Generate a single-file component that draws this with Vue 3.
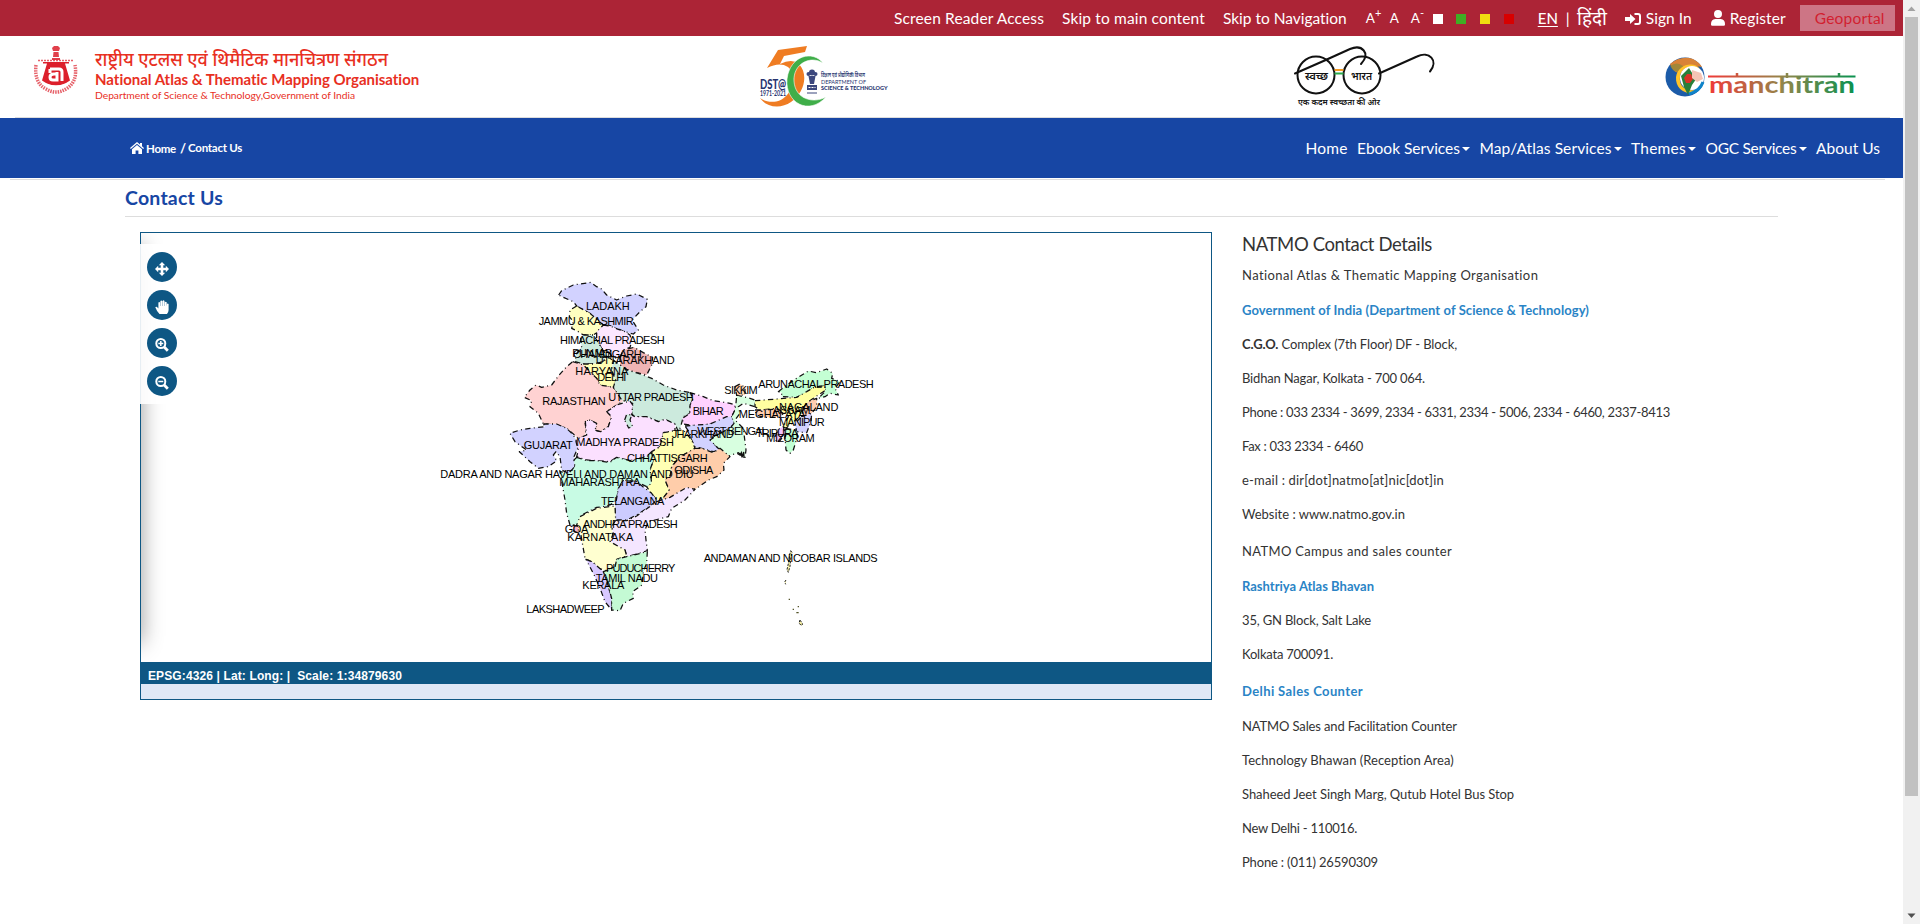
<script setup>
// Spaces the letters of a line so that it fills the given width.
const vFit = {
  mounted(el, { value }) {
    const natural = el.getBoundingClientRect().width
    const count = el.textContent.trim().length
    el.style.letterSpacing = (value - natural) / count + 'px'
  }
}

const menu = [
  { t: 'Home', w: 42, c: false },
  { t: 'Ebook Services', w: 103, c: true },
  { t: 'Map/Atlas Services', w: 132, c: true },
  { t: 'Themes', w: 55, c: true },
  { t: 'OGC Services', w: 91, c: true },
  { t: 'About Us', w: 64, c: false }
]

const contact = [
  { t: 'National Atlas & Thematic Mapping Organisation', w: 297 },
  { t: 'Government of India (Department of Science & Technology)', w: 347, k: 'link first' },
  { b: 'C.G.O.', t: ' Complex (7th Floor) DF - Block,', w: 215 },
  { t: 'Bidhan Nagar, Kolkata - 700 064.', w: 183 },
  { t: 'Phone : 033 2334 - 3699, 2334 - 6331, 2334 - 5006, 2334 - 6460, 2337-8413', w: 428 },
  { t: 'Fax : 033 2334 - 6460', w: 121 },
  { t: 'e-mail : dir[dot]natmo[at]nic[dot]in', w: 202 },
  { t: 'Website : www.natmo.gov.in', w: 163 },
  { t: 'NATMO Campus and sales counter', w: 210, k: 'wide' },
  { t: 'Rashtriya Atlas Bhavan', w: 132, k: 'link first' },
  { t: '35, GN Block, Salt Lake', w: 129 },
  { t: 'Kolkata 700091.', w: 91 },
  { t: 'Delhi Sales Counter', w: 121, k: 'link wide' },
  { t: 'NATMO Sales and Facilitation Counter', w: 215, k: 'first' },
  { t: 'Technology Bhawan (Reception Area)', w: 212 },
  { t: 'Shaheed Jeet Singh Marg, Qutub Hotel Bus Stop', w: 272 },
  { t: 'New Delhi - 110016.', w: 115 },
  { t: 'Phone : (011) 26590309', w: 136 }
]

const states = [
  ['#d2d2ff', '386,75 395,62 430,45 482,37 500,50 515,57 530,75 560,90 590,78 620,72 652,88 648,110 630,125 606,150 625,180 610,192 585,185 560,175 540,167 520,165 500,148 480,130 465,122 440,108 430,95 400,82'],
  ['#ffffc0', '440,108 420,120 418,140 430,155 425,175 445,185 460,195 490,195 505,185 520,165 500,148 480,130 465,122'],
  ['#fce6ff', '520,165 540,168 565,178 585,185 600,195 605,215 600,232 580,240 570,262 550,265 535,245 515,235 500,210 500,185'],
  ['#cceadd', '460,195 490,195 500,210 515,235 530,255 520,275 490,282 460,282 435,275 440,250 455,230 452,205'],
  ['#f0b4b4', '570,262 580,240 612,232 640,248 668,262 665,285 650,315 620,308 590,298 570,285'],
  ['#ffffb4', '460,282 490,282 520,275 535,262 548,270 545,300 557,330 555,350 530,350 510,345 500,325 485,310 460,300'],
  ['#ffd2d2', '428,275 460,285 485,310 500,325 510,345 550,352 570,375 585,390 560,405 530,425 545,440 535,470 510,485 495,480 500,462 480,450 465,455 468,478 465,500 445,505 430,492 410,475 380,465 340,462 325,430 300,410 305,392 283,382 300,360 318,345 335,352 365,345 385,318 410,290'],
  ['#d2d2ff', '340,462 380,462 410,475 430,495 438,510 445,530 432,560 435,590 415,610 395,600 390,560 378,545 370,555 380,572 355,590 325,595 300,575 268,545 290,540 255,515 240,490 270,480 300,475 345,470'],
  ['#cceadd', '550,270 570,285 590,300 625,310 665,325 700,345 740,360 780,368 790,385 780,405 780,430 760,440 752,470 745,485 735,462 705,448 685,455 650,440 615,440 605,432 608,400 575,390 550,352 557,330 545,300'],
  ['#fbe0ff', '530,425 560,405 600,393 608,405 605,435 615,440 650,440 685,455 705,448 735,462 735,482 700,488 700,505 690,530 665,545 650,560 600,572 560,562 540,575 500,572 470,570 440,560 445,540 438,515 445,505 470,495 468,478 466,455 480,450 500,460 495,482 512,485 535,470 545,440'],
  ['#cceadd', '584,450 590,433 605,435 600,450 608,470 596,474'],
  ['#ffd2ff', '780,368 820,380 850,392 900,400 915,405 915,420 905,440 890,450 870,462 840,462 800,468 760,462 757,445 780,430 780,405 790,385'],
  ['#d2d2ff', '765,468 840,462 890,440 912,440 912,460 900,475 870,490 845,505 855,525 872,540 850,545 815,535 795,530 785,510 780,490'],
  ['#d8ffe0', '920,375 960,385 975,390 975,410 940,400 925,410 930,430 915,450 925,460 940,475 948,540 945,562 925,548 890,560 870,540 840,510 870,490 900,475 912,460 905,440 915,420 918,400'],
  ['#ffd2b0', '915,350 930,342 945,352 945,375 920,376'],
  ['#c4ffd4', '1045,365 1070,345 1100,325 1135,303 1160,308 1190,297 1208,310 1205,325 1230,335 1215,355 1225,375 1200,370 1185,380 1165,385 1185,365 1185,348 1155,350 1130,368 1100,382 1055,380 1055,367'],
  ['#ffffa0', '975,392 1030,388 1100,382 1130,365 1155,350 1185,348 1185,362 1160,378 1135,395 1120,420 1110,440 1085,460 1068,475 1060,470 1075,440 1065,430 1040,415 990,420 975,410'],
  ['#ffcdb0', '1120,412 1135,395 1160,385 1160,410 1145,430 1115,440'],
  ['#d2d2ff', '1115,440 1145,430 1143,455 1130,488 1100,485 1095,460'],
  ['#ffcdb0', '975,420 1040,418 1060,430 1050,442 1000,442 980,435'],
  ['#f0c0ff', '1035,500 1045,478 1060,470 1065,490 1050,512 1040,517'],
  ['#c4ffd4', '1068,475 1100,482 1102,500 1090,540 1080,550 1068,540 1065,500'],
  ['#ffffb4', '700,488 735,482 760,480 785,510 795,535 780,545 750,560 725,590 720,620 705,630 718,660 700,685 680,690 660,665 650,650 665,630 660,600 670,570 665,545 690,530'],
  ['#ffcdaa', '795,535 815,535 850,548 870,535 900,560 880,580 882,600 860,620 835,630 800,655 760,670 725,685 695,690 718,660 705,630 722,615 725,590 750,560'],
  ['#c8fbe4', '440,562 470,572 500,572 540,577 560,562 600,572 650,560 665,548 670,570 660,600 665,640 650,650 620,635 580,630 565,655 560,690 540,705 520,710 500,712 455,735 450,762 420,765 410,730 405,690 398,650 390,605 415,610 435,590 432,570'],
  ['#ccccff', '565,655 580,632 620,635 645,655 665,670 680,690 665,705 620,735 590,750 555,750 555,715'],
  ['#f4e6ff', '680,695 720,682 770,652 795,658 765,690 725,715 715,740 655,755 645,780 648,810 652,842 620,852 590,860 585,840 555,828 540,815 550,790 545,770 555,752 590,752 620,738'],
  ['#ffffd0', '450,740 500,715 555,708 557,750 545,770 548,795 540,815 585,840 590,858 560,868 555,890 530,902 505,895 490,878 465,865 458,825 452,790 440,765'],
  ['#ffb4c8', '428,765 445,770 445,788 432,785'],
  ['#d8c8ff', '468,868 490,878 520,905 530,930 545,985 545,1020 525,995 512,960 495,920'],
  ['#c4fad4', '520,905 555,892 560,868 590,860 652,845 650,880 640,905 636,945 608,965 610,985 580,1000 570,1022 545,1020 545,985 530,930']
]

// name, left edge, right edge, baseline
const labels = [
  ['LADAKH', 469, 598, 121],
  ['JAMMU & KASHMIR', 327, 610, 166],
  ['HIMACHAL PRADESH', 391, 703, 223],
  ['PUNJAB', 428, 545, 261],
  ['CHANDIGARH', 430, 634, 264],
  ['UTTARAKHAND', 498, 733, 282],
  ['HARYANA', 437, 594, 316],
  ['DELHI', 503, 588, 333],
  ['UTTAR PRADESH', 536, 790, 394],
  ['RAJASTHAN', 338, 526, 405],
  ['BIHAR', 789, 880, 435],
  ['WEST BENGAL', 803, 1012, 495],
  ['JHARKHAND', 726, 910, 504],
  ['GUJARAT', 282, 427, 537],
  ['MADHYA PRADESH', 440, 731, 528],
  ['CHHATTISGARH', 592, 832, 576],
  ['ODISHA', 734, 849, 612],
  ['DADRA AND NAGAR HAVELI AND DAMAN AND DIU', 32, 790, 624],
  ['MAHARASHTRA', 389, 630, 648],
  ['TELANGANA', 514, 702, 705],
  ['ANDHRA PRADESH', 460, 742, 775],
  ['GOA', 405, 474, 789],
  ['KARNATAKA', 413, 609, 813],
  ['PUDUCHERRY', 529, 735, 906],
  ['TAMIL NADU', 498, 683, 936],
  ['KERALA', 458, 582, 957],
  ['LAKSHADWEEP', 290, 523, 1029],
  ['SIKKIM', 884, 982, 372],
  ['ARUNACHAL PRADESH', 986, 1330, 354],
  ['NAGALAND', 1048, 1224, 422],
  ['ASSAM', 1029, 1140, 433],
  ['MEGHALAYA', 927, 1125, 444],
  ['MANIPUR', 1048, 1183, 468],
  ['TRIPURA', 979, 1104, 501],
  ['MIZORAM', 1010, 1153, 516],
  ['ANDAMAN AND NICOBAR ISLANDS', 822, 1342, 876]
]
</script>

<template>
  <div class="page">
    <main class="content">
      <div class="topbar">
        <a v-fit="150">Screen Reader Access</a>
        <a v-fit="143" class="g18">Skip to main content</a>
        <a v-fit="124" class="g18">Skip to Navigation</a>
        <span class="size s1">A<sup>+</sup></span>
        <span class="size s2">A</span>
        <span class="size s3">A<sup>-</sup></span>
        <span class="swatches"><i class="sw white"></i><i class="sw green"></i><i class="sw yellow"></i><i class="sw red"></i></span>
        <a class="en">EN</a>
        <span class="bar">|</span>
        <svg class="hin" width="31" height="30" viewBox="0 0 31 30"><text x="0" y="22" textLength="30" lengthAdjust="spacingAndGlyphs" font-size="19" fill="#fff">हिंदी</text></svg>
        <svg class="signicon" width="16" height="12" viewBox="0 0 16 12"><path d="M0 4h5V1l5.500 5L5 11V8H0zM9.500 0H13a3 3 0 0 1 3 3v6a3 3 0 0 1-3 3H9.500v-2H13q1 0 1-1V3q0-1-1-1H9.500z" fill="#fff" /></svg>
        <a v-fit="46" class="g5">Sign In</a>
        <svg class="usericon" width="14" height="16" viewBox="0 0 14 16"><path d="M7 0a4 4 0 1 1 0 8 4 4 0 0 1 0-8zM4.300 9h5.400Q14 9.500 14 14v.5q0 1.200-1.200 1.200H1.200Q0 15.700 0 14.500V14Q0 9.500 4.300 9z" fill="#fff" /></svg>
        <a v-fit="56" class="g5">Register</a>
        <a class="geo"><span v-fit="70">Geoportal</span></a>
      </div>

      <header class="brand">
        <svg class="emblem" width="46" height="52" viewBox="0 0 46 52">
          <g fill="#dc1f2b">
            <path d="M19 3l2-2h4l2 2-1 3h-6zM20.500 7h5l.5 5h-6zM19 13h8v2h-8z" opacity=".85" />
            <path d="M10 17h26v1.500h-4l5 17q-7 5-14 5T9 35.500l5-17h-4z" />
            <path d="M5 15.500h35" stroke="#dc1f2b" stroke-width="1.300" stroke-dasharray="2 1" opacity=".7" />
          </g>
          <path d="M17 24h9q3 0 3 3v9M17 28v-4M25 29h-4q-4 0-4 3 0 3 3 3h4v-8" fill="none" stroke="#fff" stroke-width="3" />
          <path d="M3 20Q1 38 13 44q10 6 20 0 12-7 9-24" fill="none" stroke="#dc1f2b" stroke-width="3.500" stroke-dasharray="1.500 1" opacity=".7" />
          <path d="M12 39.500q11 4 22 0" fill="none" stroke="#fff" stroke-width="2" />
        </svg>
        <div class="org">
          <svg class="org-hi" width="294" height="26" viewBox="0 0 294 26"><text x="0" y="19" textLength="293" lengthAdjust="spacingAndGlyphs" font-size="18.500" font-weight="500" fill="#e8301f">राष्ट्रीय एटलस एवं थिमैटिक मानचित्रण संगठन</text></svg>
          <strong v-fit="325">National Atlas &amp; Thematic Mapping Organisation</strong>
          <small v-fit="260">Department of Science &amp; Technology,Government of India</small>
        </div>

        <svg class="dst" width="136" height="66" viewBox="0 0 136 66">
          <path d="M18 5L47 1l-2 6-21 4-4 8Q32 13 39 19c10 11 5 29-8 38-10 7-24 6-31-4 9 6 20 5 27-3 8-9 9-22 1-28-6-4-13-3-21 1z" fill="#ef7c22" />
          <path d="M63 18C53 5 30 10 27 34c-2 24 22 37 39 18C53 59 35 54 34 36 33 19 50 10 63 18z" fill="#3fae49" stroke="#fff" stroke-width=".6" />
          <g fill="#27346f" opacity=".9">
            <circle cx="52" cy="27.500" r="3" /><circle cx="48.500" cy="29" r="2" /><circle cx="55.500" cy="29" r="2" /><path d="M48.500 31h7l-1.500 8h-4zM47 40h10v5H47zM47 47.500h10v1H47z" />
          </g>
          <path d="M48.500 42.500h7" stroke="#fff" stroke-width="1" stroke-dasharray="2 1" />
          <g fill="#27346f">
            <text x="0" y="43.500" font-size="13.500" font-weight="900" textLength="26" lengthAdjust="spacingAndGlyphs">DST@</text>
            <text x="0" y="51" font-size="7.500" font-weight="700" textLength="26" lengthAdjust="spacingAndGlyphs">1971-2021</text>
            <text x="61" y="31.500" font-size="6" font-weight="600" textLength="44" lengthAdjust="spacingAndGlyphs">विज्ञान एवं प्रौद्योगिकी विभाग</text>
            <text x="61" y="39" font-size="6.300" textLength="45" lengthAdjust="spacingAndGlyphs">DEPARTMENT OF</text>
            <text x="61" y="45" font-size="6.300" font-weight="900" textLength="66.500" lengthAdjust="spacingAndGlyphs">SCIENCE &amp; TECHNOLOGY</text>
          </g>
        </svg>

        <svg class="swachh" width="150" height="64" viewBox="0 0 150 64">
          <g fill="none" stroke="#111" stroke-width="2" stroke-linecap="round">
            <circle cx="20" cy="32" r="18.500" /><circle cx="66" cy="32" r="18.500" />
            <path d="M-1 30.500Q28 18 54 6c12-5 21 4 11 15M83 30.500l38-17c12-6 22 4 13 15" />
          </g>
          <path d="M38.500 27h9" stroke="#f59a23" stroke-width="2" /><path d="M38.500 30.500h9" stroke="#2aa84a" stroke-width="2" />
          <g fill="#111">
            <text x="9" y="37" font-size="10.500" font-weight="600" textLength="23" lengthAdjust="spacingAndGlyphs">स्वच्छ</text>
            <text x="55" y="37" font-size="10.500" font-weight="600" textLength="21" lengthAdjust="spacingAndGlyphs">भारत</text>
            <text x="2" y="61.500" font-size="8.500" font-weight="600" textLength="82" lengthAdjust="spacingAndGlyphs">एक कदम स्वच्छता की ओर</text>
          </g>
        </svg>

        <svg class="manchitran" width="192" height="42" viewBox="0 0 192 42">
          <defs>
            <linearGradient id="word" gradientUnits="userSpaceOnUse" x1="43" x2="190" y1="0" y2="0"><stop offset="0" stop-color="#f03a38" /><stop offset=".5" stop-color="#94854a" /><stop offset="1" stop-color="#0a9250" /></linearGradient>
          </defs>
          <circle cx="20" cy="21" r="19.500" fill="#1c5ba8" />
          <path d="M5 8Q16-1 28 3q6 3 9 8-7-2-9 4-7 4-12 1-7 3-11-8z" fill="#d98237" />
          <path d="M5 10q7-5 13 0 3 5-3 6-6 1-10-6z" fill="#7b8a3b" opacity=".6" />
          <path d="M35 13C29 5 13 8 11 21c-1 14 14 20 21 13-14 2-18-6-17-13 1-9 9-14 20-8z" fill="#ffc328" />
          <circle cx="27" cy="22" r="12" fill="#fff" />
          <path d="M16 20l8-8 5 8 5-1-7 10-4 10-4-8z" fill="#287f39" />
          <path d="M19 22l3-4h4l2 5-3 4h-4z" fill="#d83227" />
          <path d="M27 14l9 3 2 6-6 3-5-4z" fill="#f5c4b5" />
          <path d="M24 38q11-3 14-12" fill="none" stroke="#0e83c9" stroke-width="3" />
          <path d="M43 20.500h147.500" stroke="url(#word)" stroke-width="2.200" />
          <text x="44" y="37" font-size="23" font-weight="700" textLength="146" lengthAdjust="spacingAndGlyphs" fill="url(#word)">manchitran</text>
          <path d="M72 17v3M122 17v5M174 17v3" stroke="url(#word)" stroke-width="2.500" />
        </svg>
      </header>

      <nav class="nav">
        <div class="crumb">
          <svg width="14" height="12" viewBox="0 0 14 12"><path d="M7 0l3 2.600V1h2v3.300l2 1.800-.8.9L7 1.700.8 7 0 6.100zM7 3l5 4.200V12H8.400V8.500H5.600V12H2V7.200z" fill="#fff" /></svg>
          <b v-fit="30" class="home">Home</b><b class="slash">/</b><b v-fit="54" class="here">Contact Us</b>
        </div>
        <div class="menu">
          <a v-for="m in menu" :key="m.t"><span v-fit="m.w">{{ m.t }}</span><i v-if="m.c" class="caret"></i></a>
        </div>
      </nav>
      <div class="rule"></div>

      <h1><span v-fit="98">Contact Us</span></h1>

      <div class="columns">
        <section class="mapbox">
          <div class="canvas">
            <svg class="map" viewBox="-867 -111 3207 1287">
              <g stroke="#111" stroke-width="3.800" stroke-dasharray="16 10 3 10" stroke-linejoin="round">
                <polygon v-for="(s, i) in states" :key="i" :fill="s[0]" :points="s[1]" />
              </g>
              <path d="M922 550l8 5 4-7 2 14 5-16 1 18M928 555h12" fill="none" stroke="#111" stroke-width="4" />
              <g fill="#f6efa0" stroke="#222" stroke-width="3" stroke-dasharray="7 4">
                <path d="M1082 842l4 5-4 20-2 22-5 18-4-8 4-18 3-22zM1068 930l-4 6 3 7M1110 1050l-3 9 7 8 4-5z" />
              </g>
              <path d="M1076 988h4M1088 1018h4M1099 1028h7M1103 1010h4" stroke="#55552a" stroke-width="4" />
              <g class="labels">
                <text v-for="l in labels" :key="l[0]" :x="l[1] - 1" :y="l[3]" :textLength="l[2] - l[1] + 2">{{ l[0] }}</text>
              </g>
            </svg>
          </div>
          <div class="status"><span v-fit="254">EPSG:4326 | Lat: Long: |&nbsp; Scale: 1:34879630</span></div>
          <div class="foot"></div>
          <div class="tools">
            <button><svg viewBox="0 0 14 14"><path d="M7 0l3.200 3.200H8.300v2.500h2.500V3.800L14 7l-3.200 3.200V8.300H8.300v2.500h1.900L7 14l-3.200-3.200h1.900V8.300H3.200v1.900L0 7l3.200-3.200v1.900h2.500V3.200H3.800z" /></svg></button>
            <button><svg viewBox="0 0 14 14"><path d="M.3 7.200q1.200-1 2.600.8l.5.600V2.600q.8-1.300 1.700 0V6h.3V1.100q.9-1.200 1.900 0V6h.3V.9q1-1.100 1.900 0V6h.3V2.300q.9-1.200 1.900 0V5.600h.2V4q.8-1 1.700 0v6q0 2-1.600 4H4.500Q2 11.700.3 7.200z" /></svg></button>
            <button><svg viewBox="0 0 14 14"><g class="glass"><circle cx="5.800" cy="5.500" r="4.500" /><path d="M9.200 9l3.600 3.700" class="handle" /><path d="M3.300 5.500h5M5.800 3v5" class="sign" /></g></svg></button>
            <button><svg viewBox="0 0 14 14"><g class="glass"><circle cx="5.800" cy="5.500" r="4.500" /><path d="M9.200 9l3.600 3.700" class="handle" /><path d="M3.300 5.500h5" class="sign" /></g></svg></button>
          </div>
        </section>

        <section class="details">
          <h2><span v-fit="190">NATMO Contact Details</span></h2>
          <p v-for="r in contact" :key="r.t" :class="r.k"><span v-fit="r.w"><b v-if="r.b">{{ r.b }}</b>{{ r.t }}</span></p>
        </section>
      </div>
    </main>

    <aside class="scroll">
      <svg width="17" height="17" viewBox="0 0 17 17"><path d="M4.500 11h8l-4-4.500z" fill="#a3a3a3" /></svg>
      <div class="thumb"></div>
      <svg class="down" width="17" height="17" viewBox="0 0 17 17"><path d="M4.500 6.500h8l-4 4.500z" fill="#505050" /></svg>
    </aside>
  </div>
</template>

<style>
body { overflow: hidden; background: #fff; }
</style>

<style scoped>
.page {
  display: flex;
  width: 1920px;
  height: 924px;
  overflow: hidden;
  font-family: Lato, "Open Sans", "Noto Sans", sans-serif;
  color: #333;
}
.page * { box-sizing: border-box; }
span, a, b, strong, small { white-space: pre; flex: none; }
svg { flex: none; overflow: visible; }
.content { width: 1903px; height: 924px; flex: none; }

.topbar {
  display: flex;
  align-items: center;
  height: 36px;
  padding-left: 894px;
  background: #ac2436;
  color: #fff;
  font-size: 15.5px;
  line-height: 36px;
}
.g18 { margin-left: 18px; }
.g5 { margin-left: 5px; }
.size { font-size: 13.5px; }
.size sup { font-size: 11px; line-height: 0; vertical-align: 6px; }
.s1 { width: 24px; margin-left: 19px; }
.s2 { width: 21px; }
.s3 { width: 22px; }
.swatches { display: flex; gap: 13.600px; width: 105px; padding-top: 2px; }
.sw { width: 10px; height: 10px; }
.white { background: #fff; }
.green { background: #41ad24; }
.yellow { background: #f0dd10; }
.red { background: #d80000; }
.en { text-decoration: underline; text-underline-offset: 2px; font-size: 15px; width: 28px; font-weight: 500; }
.bar { width: 11px; }
.hin { width: 31px; margin-right: 17px; }
.signicon { margin-top: 1px; }
.usericon { margin-left: 19px; }
.geo {
  width: 95px;
  height: 26px;
  margin-left: 14px;
  padding-left: 15px;
  background: #cd7585;
  color: #d21f30;
  line-height: 26px;
}

.brand {
  display: flex;
  height: 82px;
  margin: 0 13px 0 15px;
  border-bottom: 1px solid #ddd;
}
.emblem { margin: 9px 0 0 18px; }
.org { display: flex; flex-direction: column; align-items: flex-start; width: 324px; margin: 11px 0 0 16px; color: #e8301f; }
.org-hi { margin-bottom: -3px; }
.org strong { margin-top: -1px; font-size: 15px; line-height: 20px; }
.org small { font-size: 10.300px; line-height: 13px; }
.dst { margin: 9px 0 0 341px; }
.swachh { margin: 7px 0 0 400px; }
.manchitran { margin: 20px 0 0 219px; }

.nav {
  display: flex;
  align-items: center;
  height: 60px;
  padding: 0 23px 0 130px;
  background: #1746a4;
  color: #fff;
}
.crumb { display: flex; align-items: center; font-size: 11.500px; }
.home { margin-left: 2px; }
.slash { margin: 0 2px 0 4px; font-size: 13px; }
.here { margin-top: -1px; }
.menu { display: flex; gap: 9.500px; margin-left: auto; font-size: 15.500px; }
.menu a { display: flex; align-items: center; }
.caret { margin: 2px 0 0 2px; border: 4px solid transparent; border-top-color: #fff; border-bottom: 0; }

.rule { height: 2px; margin: 0 18px 0 10px; border-bottom: 1px solid #ddd; }
h1 {
  height: 37px;
  margin: 0 125px;
  border-bottom: 1px solid #ddd;
  color: #1746a4;
  font-size: 19.500px;
  font-weight: 700;
  line-height: 35px;
}
h1 span, .geo span, p span, h2 span, .status span { display: inline-block; }

.columns { display: flex; align-items: flex-start; gap: 30px; margin: 15px 0 0 140px; }
.mapbox { position: relative; width: 1072px; height: 468px; border: 1px solid #0e5784; }
.canvas { height: 429px; overflow: hidden; background: #fff; }
.canvas::before {
  content: "";
  position: absolute;
  left: -20px;
  top: 12px;
  width: 20px;
  height: 398px;
  box-shadow: 0 0 22px rgba(0, 0, 0, .42);
  clip-path: inset(-12px -30px -20px 20px);
}
.map { display: block; width: 1069px; height: 429px; }
.labels { font-family: "Liberation Sans", Arial, sans-serif; font-size: 33px; fill: #000; }
.status {
  position: relative;
  height: 22px;
  padding-left: 7px;
  background: #0e5784;
  color: #fff;
  font: 700 12px/28px "Liberation Sans", Arial, sans-serif;
}
.foot { height: 15px; background: #dfe8f6; }
.tools {
  position: absolute;
  left: -1px;
  top: 11px;
  width: 38px;
  height: 160px;
  display: flex;
  flex-direction: column;
  gap: 8px;
  padding: 8px 0 0 7px;
  background: rgba(255, 255, 255, .9);
}
.tools button { width: 30px; height: 30px; padding: 4px 0 0; border: 0; border-radius: 50%; background: #0e5784; display: flex; align-items: center; justify-content: center; }
.tools svg { width: 14px; height: 14px; fill: #fff; }
.glass { fill: none; stroke: #fff; stroke-width: 2; }
.glass .handle { stroke-width: 2.800; }
.glass .sign { stroke-width: 1.500; }

h2 { height: 27px; margin: 0; font-size: 18.500px; font-weight: 400; line-height: 24px; }
p { height: 34px; margin: 0; font-size: 13px; line-height: 32px; }
p.first { padding-top: 1px; height: 35px; }
p.wide { height: 37px; padding-top: 3px; }
p.link { color: #2a84c6; font-weight: 700; }

.scroll { display: flex; flex-direction: column; width: 17px; height: 924px; background: #f1f1f1; }
.thumb { width: 13px; height: 779px; margin-left: 2px; background: #c1c1c1; }
.down { margin-top: auto; }
</style>
